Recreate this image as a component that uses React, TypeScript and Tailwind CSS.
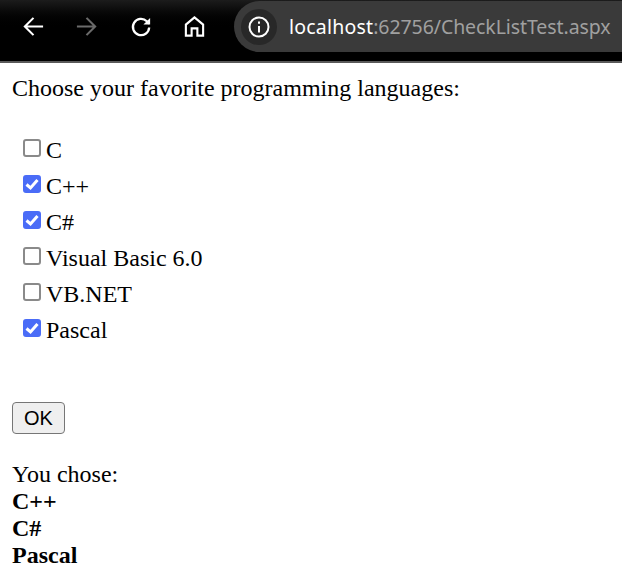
import React from "react";

const items: [string, boolean][] = [
  ["C", false],
  ["C++", true],
  ["C#", true],
  ["Visual Basic 6.0", false],
  ["VB.NET", false],
  ["Pascal", true],
];

export default function App() {
  return (
    <div className="w-[622px] h-[583px] overflow-hidden bg-white text-black font-['Liberation_Serif',serif] text-[24px] leading-[27px]">
      <div className="h-[63px] bg-gradient-to-b from-[#1c1c1c] to-[#000000] to-50% border-b-2 border-[#5a5a5a] flex items-start">
        <div className="w-[234px] h-[52px] shrink-0 flex items-center text-white">
          <svg className="ml-[22px]" width="23" height="23" viewBox="0 0 24 24" fill="none" stroke="#ffffff" strokeWidth="2.2">
            <path d="M22 12H3M12 3l-9 9 9 9" />
          </svg>
          <svg className="ml-[30px]" width="23" height="23" viewBox="0 0 24 24" fill="none" stroke="#6b6b6b" strokeWidth="2.2">
            <path d="M2 12h19M12 3l9 9-9 9" />
          </svg>
          <svg className="ml-[32px]" width="23" height="23" viewBox="0 0 24 24" fill="none" stroke="#ffffff" strokeWidth="2.4">
            <path d="M20 13a8.5 8.5 0 1 1-2.5-6.5L20 9" />
            <path d="M21 3v7h-7" fill="#ffffff" stroke="none" />
          </svg>
          <svg className="ml-[30px]" width="23" height="23" viewBox="0 0 24 24" fill="none" stroke="#ffffff" strokeWidth="2.2">
            <path d="M12 2.5 3 10v11.5h6V14h6v7.5h6V10z" />
          </svg>
        </div>
        <div className="mt-[1px] h-[51px] flex-1 bg-[#3a3a3a] rounded-l-[26px] flex items-center pl-[7px]">
          <div className="w-[36px] h-[36px] rounded-full bg-[#282828] flex items-center justify-center">
            <svg width="24" height="24" viewBox="0 0 24 24" fill="none" stroke="#ffffff" strokeWidth="2">
              <circle cx="12" cy="12" r="9.5" />
              <path d="M12 11v6.5M12 6.5v2.2" />
            </svg>
          </div>
          <div className="ml-[12px] whitespace-nowrap font-['Noto_Sans',sans-serif] text-[19.5px] text-[#a0a0a0] tracking-[-0.08px]">
            <span className="text-white tracking-[0.2px]">localhost</span>:62756/CheckListTest.aspx
          </div>
        </div>
      </div>
      <div className="pl-[12px]">
        <p className="mt-[12px]">Choose your favorite programming languages:</p>
        <div className="mt-[30px] flex flex-col">
          {items.map(([label, on]) => (
            <label key={label} className="h-[36px] flex items-center pl-[11px] whitespace-nowrap">
              <span className="relative w-[18px] h-[18px] mt-[-4px] shrink-0">
                <input
                  type="checkbox"
                  defaultChecked={on}
                  className="peer block m-0 w-full h-full appearance-none rounded-[3px] border-2 border-[#8a8a8a] bg-white checked:bg-[#4a6cf7] checked:border-[#4a6cf7]"
                />
                <svg className="absolute inset-0 hidden peer-checked:block pointer-events-none" width="18" height="18" viewBox="0 0 18 18" fill="none" stroke="#ffffff" strokeWidth="3">
                  <path d="M3.5 9.5 7.5 13 14.5 5" />
                </svg>
              </span>
              <span className="ml-[5px]">{label}</span>
            </label>
          ))}
        </div>
        <button className="mt-[54px] block w-[53px] h-[32px] bg-[#efefef] border border-[#767676] rounded-[4px] font-['Liberation_Sans',sans-serif] text-[20px] leading-[30px] text-center">
          OK
        </button>
        <div className="mt-[27px]">You chose:</div>
        <div className="font-bold">C++</div>
        <div className="font-bold">C#</div>
        <div className="font-bold">Pascal</div>
      </div>
    </div>
  );
}
